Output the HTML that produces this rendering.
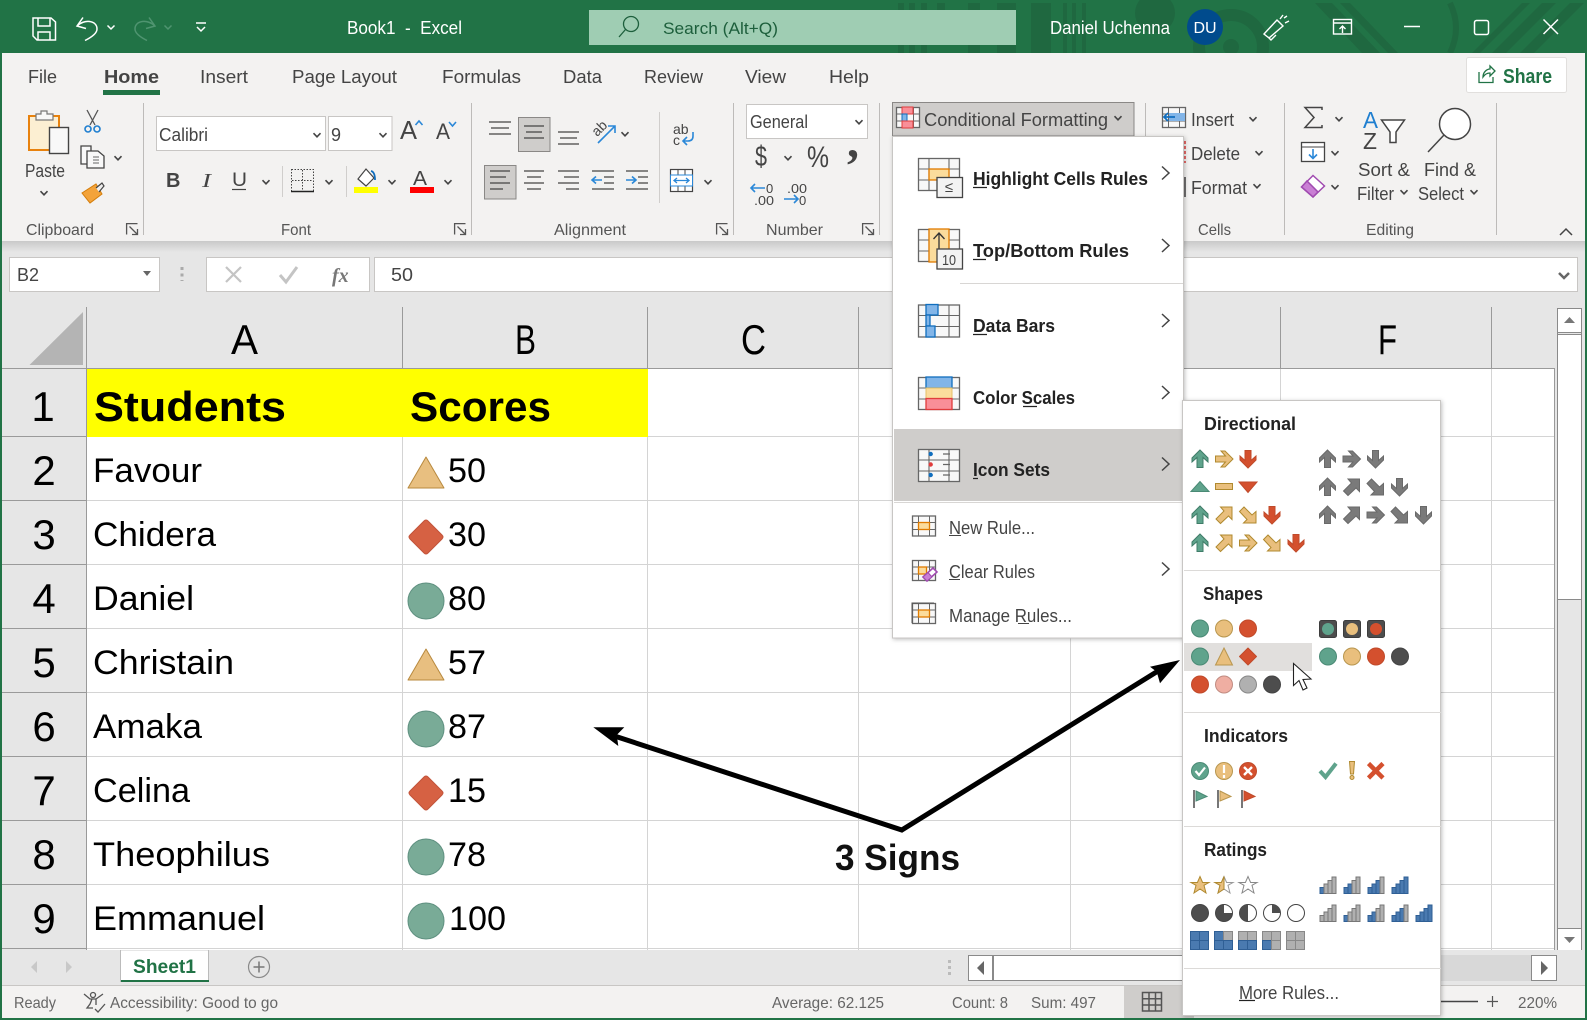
<!DOCTYPE html>
<html><head><meta charset="utf-8"><title>Book1 - Excel</title>
<style>
html,body{margin:0;padding:0;background:#e6e6e6}
svg{display:block;font-family:"Liberation Sans",sans-serif}
.r{fill:#444;font-size:18px}
.l{fill:#555;font-size:16px}
.w{fill:#fff;font-size:18px}
.c{fill:#000;font-size:34px}
.h{fill:#000;font-size:42px}
.b{fill:#000;font-size:42px;font-weight:bold}
.m{fill:#222;font-size:18px;font-weight:bold}
.n{fill:#444;font-size:18px}
.t{fill:#222;font-size:18px;font-weight:bold}
.s{fill:#666;font-size:16px}
</style></head><body>
<svg xmlns="http://www.w3.org/2000/svg" width="1587" height="1020" viewBox="0 0 1587 1020">
<defs>
<clipPath id="tb"><rect x="0" y="0" width="1587" height="53"/></clipPath>
<linearGradient id="sh" x1="0" y1="0" x2="0" y2="1"><stop offset="0" stop-color="#c9c9c9"/><stop offset="1" stop-color="#e6e6e6"/></linearGradient>
<filter id="ds" x="-5%" y="-5%" width="110%" height="110%"><feDropShadow dx="1" dy="1" stdDeviation="2" flood-color="#000" flood-opacity=".25"/></filter>
<path id="ch" d="M-3.500-1.800L0 1.800L3.500-1.800" fill="none" stroke="#444" stroke-width="1.600"/>
<path id="cr" d="M-3.500-6.500L3.500 0L-3.500 6.500" fill="none" stroke="#444" stroke-width="1.500"/>
<g id="ln" fill="none" stroke="#555" stroke-width="1.300"><path d="M.6 11.500V.6H11.500"/><path d="M3.500 3.500L11 11M11.500 6V11.500H6"/></g>
<path id="au" d="M0-9L8-1V3L3-1.500V8.500H-3V-1.500L-8 3V-1Z"/>
<path id="an" d="M8-8V4.500L4.500 1L-3.500 8.500L-8 4L0-4L-3.500-8Z"/>
<g id="gu"><use href="#au" fill="#5fa38c" stroke="#3f7c68"/></g>
<g id="gd"><use href="#au" transform="rotate(180)" fill="#d4502e" stroke="#c04a2a"/></g>
<g id="oe"><use href="#au" transform="rotate(90)" fill="#e9bf7d" stroke="#b08a2f"/></g>
<g id="one"><use href="#an" fill="#e9bf7d" stroke="#b08a2f"/></g>
<g id="ose"><use href="#an" transform="rotate(90)" fill="#e9bf7d" stroke="#b08a2f"/></g>
<g id="yu"><use href="#au" fill="#7a7a7a" stroke="#6a6a6a"/></g>
<g id="yd"><use href="#au" transform="rotate(180)" fill="#7a7a7a" stroke="#6a6a6a"/></g>
<g id="ye"><use href="#au" transform="rotate(90)" fill="#7a7a7a" stroke="#6a6a6a"/></g>
<g id="yne"><use href="#an" fill="#7a7a7a" stroke="#6a6a6a"/></g>
<g id="yse"><use href="#an" transform="rotate(90)" fill="#7a7a7a" stroke="#6a6a6a"/></g>
<circle id="cg" r="8.500" fill="#5fa38c" stroke="#4a8a75"/>
<circle id="co" r="8.500" fill="#e9bf7d" stroke="#b8964e"/>
<circle id="cd" r="8.500" fill="#d4502e" stroke="#c04a2a"/>
<circle id="ck" r="8.500" fill="#4d4d4d" stroke="#444"/>
<g id="g5"><rect x=".5" y=".5" width="41" height="32" fill="#f8f8f8" stroke="#666" stroke-width="1.300"/><path d="M11 0V33M31 0V33M0 11H42M0 22H42" stroke="#666" stroke-width="1.100" fill="none"/></g>
<g id="g3"><rect x=".5" y=".5" width="23" height="20" fill="#f8f8f8" stroke="#666" stroke-width="1.300"/><path d="M6.500 0V21M17.500 0V21M0 7H24M0 14H24" stroke="#666" stroke-width="1" fill="none"/></g>
<g id="b0" fill="#b0b0b0" stroke="#777"><rect x=".5" y="11" width="4" height="6"/><rect x="4.500" y="7.500" width="4" height="9.500"/><rect x="8.500" y="4" width="4" height="13"/><rect x="12.500" y=".5" width="4" height="16.500"/></g>
<g id="b1" stroke="#777"><rect x=".5" y="11" width="4" height="6" fill="#4a7ab0" stroke="#2f5f95"/><rect x="4.500" y="7.500" width="4" height="9.500" fill="#b0b0b0"/><rect x="8.500" y="4" width="4" height="13" fill="#b0b0b0"/><rect x="12.500" y=".5" width="4" height="16.500" fill="#b0b0b0"/></g>
<g id="b2" stroke="#777"><rect x=".5" y="11" width="4" height="6" fill="#4a7ab0" stroke="#2f5f95"/><rect x="4.500" y="7.500" width="4" height="9.500" fill="#4a7ab0" stroke="#2f5f95"/><rect x="8.500" y="4" width="4" height="13" fill="#b0b0b0"/><rect x="12.500" y=".5" width="4" height="16.500" fill="#b0b0b0"/></g>
<g id="b3" stroke="#777"><rect x=".5" y="11" width="4" height="6" fill="#4a7ab0" stroke="#2f5f95"/><rect x="4.500" y="7.500" width="4" height="9.500" fill="#4a7ab0" stroke="#2f5f95"/><rect x="8.500" y="4" width="4" height="13" fill="#4a7ab0" stroke="#2f5f95"/><rect x="12.500" y=".5" width="4" height="16.500" fill="#b0b0b0"/></g>
<g id="b4" fill="#4a7ab0" stroke="#2f5f95"><rect x=".5" y="11" width="4" height="6"/><rect x="4.500" y="7.500" width="4" height="9.500"/><rect x="8.500" y="4" width="4" height="13"/><rect x="12.500" y=".5" width="4" height="16.500"/></g>
<path id="st" d="M0-9L2.600-3H9L4-.2L6 7.500L0 3.500L-6 7.500L-4-.2L-9-3H-2.600Z"/>
<circle id="bc" r="18" fill="#79ab97" stroke="#5f9080"/>
<path id="bt" d="M0-16L18 15H-18Z" fill="#e8bf80" stroke="#b8893e" stroke-linejoin="round"/>
<path id="bd" d="M-16-2L-2-16Q0-18 2-16L16-2Q18 0 16 2L2 16Q0 18-2 16L-16 2Q-18 0-16-2Z" fill="#d66143" stroke="#c2533a"/>
</defs>

<!-- base -->
<rect width="1587" height="1020" fill="#e6e6e6"/>

<!-- grid -->
<rect x="87" y="369" width="1467" height="581" fill="#fff"/>
<rect x="87" y="369" width="561" height="68" fill="#ffff00"/>
<g stroke="#d4d4d4" stroke-width="1">
<path d="M402.500 437V950M647.500 437V950M858.500 369V950M1070.500 369V950M1280.500 369V950M1491.500 369V950"/>
<path d="M648 436.500H1554M87 500.500H1554M87 564.500H1554M87 628.500H1554M87 692.500H1554M87 756.500H1554M87 820.500H1554M87 884.500H1554M87 948.500H1554"/>
</g>
<path d="M2 436.500H87M2 500.500H87M2 564.500H87M2 628.500H87M2 692.500H87M2 756.500H87M2 820.500H87M2 884.500H87M2 948.500H87" stroke="#9a9a9a" fill="none"/>
<path d="M2 368.500H1554M86.500 307V950M402.500 307V368M647.500 307V368M858.500 307V368M1070.500 307V368M1280.500 307V368M1491.500 307V368M1554.500 368V950" stroke="#9a9a9a" fill="none"/>
<path d="M83 312V365H29.500Z" fill="#b4b4b4"/>

<text class="h" x="231" y="354" textLength="27" lengthAdjust="spacingAndGlyphs">A</text>
<text class="h" x="515" y="354" textLength="21" lengthAdjust="spacingAndGlyphs">B</text>
<text class="h" x="741" y="354" textLength="25" lengthAdjust="spacingAndGlyphs">C</text>
<text class="h" x="1378" y="354" textLength="19" lengthAdjust="spacingAndGlyphs">F</text>

<text class="h" x="43" y="421" text-anchor="middle">1</text>
<text class="h" x="44" y="485" text-anchor="middle">2</text>
<text class="h" x="44" y="549" text-anchor="middle">3</text>
<text class="h" x="44" y="613" text-anchor="middle">4</text>
<text class="h" x="44" y="677" text-anchor="middle">5</text>
<text class="h" x="44" y="741" text-anchor="middle">6</text>
<text class="h" x="44" y="805" text-anchor="middle">7</text>
<text class="h" x="44" y="869" text-anchor="middle">8</text>
<text class="h" x="44" y="933" text-anchor="middle">9</text>

<text class="b" x="94" y="421" textLength="192" lengthAdjust="spacingAndGlyphs">Students</text>
<text class="b" x="410" y="421" textLength="141" lengthAdjust="spacingAndGlyphs">Scores</text>

<text class="c" x="93" y="482" textLength="109" lengthAdjust="spacingAndGlyphs">Favour</text>
<text class="c" x="93" y="546" textLength="123" lengthAdjust="spacingAndGlyphs">Chidera</text>
<text class="c" x="93" y="610" textLength="101" lengthAdjust="spacingAndGlyphs">Daniel</text>
<text class="c" x="93" y="674" textLength="141" lengthAdjust="spacingAndGlyphs">Christain</text>
<text class="c" x="93" y="738" textLength="109" lengthAdjust="spacingAndGlyphs">Amaka</text>
<text class="c" x="93" y="802" textLength="97" lengthAdjust="spacingAndGlyphs">Celina</text>
<text class="c" x="93" y="866" textLength="177" lengthAdjust="spacingAndGlyphs">Theophilus</text>
<text class="c" x="93" y="930" textLength="172" lengthAdjust="spacingAndGlyphs">Emmanuel</text>

<text class="c" x="448" y="482" textLength="38" lengthAdjust="spacingAndGlyphs">50</text>
<text class="c" x="448" y="546" textLength="38" lengthAdjust="spacingAndGlyphs">30</text>
<text class="c" x="448" y="610" textLength="38" lengthAdjust="spacingAndGlyphs">80</text>
<text class="c" x="448" y="674" textLength="38" lengthAdjust="spacingAndGlyphs">57</text>
<text class="c" x="448" y="738" textLength="38" lengthAdjust="spacingAndGlyphs">87</text>
<text class="c" x="448" y="802" textLength="38" lengthAdjust="spacingAndGlyphs">15</text>
<text class="c" x="448" y="866" textLength="38" lengthAdjust="spacingAndGlyphs">78</text>
<text class="c" x="449" y="930" textLength="57" lengthAdjust="spacingAndGlyphs">100</text>

<use href="#bt" x="426" y="473"/>
<use href="#bd" x="426" y="537"/>
<use href="#bc" x="426" y="601"/>
<use href="#bt" x="426" y="665"/>
<use href="#bc" x="426" y="729"/>
<use href="#bd" x="426" y="793"/>
<use href="#bc" x="426" y="857"/>
<use href="#bc" x="426" y="921"/>

<!-- vertical scrollbar -->
<rect x="1557.500" y="308.500" width="24" height="643" fill="#e6e6e6" stroke="#8a8a8a"/>
<rect x="1557.500" y="308.500" width="24" height="24" fill="#fff" stroke="#8a8a8a"/>
<rect x="1557.500" y="334.500" width="24" height="265" fill="#fff" stroke="#8a8a8a"/>
<path d="M1564 323L1569.500 317L1575 323Z" fill="#777"/>
<rect x="1557.500" y="928.500" width="24" height="23" fill="#fff" stroke="#8a8a8a"/>
<path d="M1564 937L1569.500 943L1575 937Z" fill="#777"/>

<!-- tabs bar -->
<rect x="2" y="950" width="1583" height="35" fill="#e6e6e6"/>
<path d="M2 985.500H1585" stroke="#c8c6c4"/>
<rect x="121" y="951" width="88" height="30" fill="#fff"/>
<path d="M120.500 950V982M208.500 950V982" stroke="#bbb"/>
<rect x="121" y="980" width="88" height="2" fill="#217346"/>
<text x="133" y="973" font-size="19" font-weight="bold" fill="#217346" textLength="63" lengthAdjust="spacingAndGlyphs">Sheet1</text>
<path d="M37 961L31 967L37 973ZM66 961L72 967L66 973Z" fill="#c8c8c8"/>
<circle cx="259" cy="967" r="10.500" fill="none" stroke="#8a8a8a" stroke-width="1.200"/>
<path d="M253.500 967H264.500M259 961.500V972.500" stroke="#777" stroke-width="1.500"/>
<path d="M949.500 960V975" stroke="#bbb" stroke-width="3" stroke-dasharray="3 3"/>
<rect x="968.500" y="955.500" width="480" height="25" fill="#fff" stroke="#8a8a8a"/>
<path d="M993 955V981" stroke="#8a8a8a" stroke-width="2"/>
<rect x="1441" y="955" width="90" height="26" fill="#d8d8d8"/>
<rect x="968.500" y="955.500" width="24" height="25" fill="#fff" stroke="#8a8a8a"/>
<path d="M984 961L977 968L984 975Z" fill="#666"/>
<rect x="1531.500" y="955.500" width="25" height="25" fill="#fff" stroke="#8a8a8a"/>
<path d="M1541 961L1548 968L1541 975Z" fill="#666"/>

<!-- status -->
<rect x="2" y="986" width="1583" height="32" fill="#f3f2f1"/>
<text class="s" x="14" y="1008" textLength="42" lengthAdjust="spacingAndGlyphs">Ready</text>
<g fill="none" stroke="#555" stroke-width="1.300"><circle cx="93" cy="995" r="2.500"/><path d="M84 994L90 999L96 999L103 994M92 999L90 1004L87 1008H93M96 999V1005"/><path d="M95 1009L98 1012L105 1004"/></g>
<text class="s" x="110" y="1008" textLength="168" lengthAdjust="spacingAndGlyphs">Accessibility: Good to go</text>
<text class="s" x="772" y="1008" textLength="112" lengthAdjust="spacingAndGlyphs">Average: 62.125</text>
<text class="s" x="952" y="1008" textLength="56" lengthAdjust="spacingAndGlyphs">Count: 8</text>
<text class="s" x="1031" y="1008" textLength="65" lengthAdjust="spacingAndGlyphs">Sum: 497</text>
<rect x="1124" y="986" width="70" height="32" fill="#cfcdcb"/>
<g fill="none" stroke="#555" stroke-width="1.500"><rect x="1142.500" y="992.500" width="19" height="18.500"/><path d="M1149 992V1011M1155.500 992V1011M1142 998.700H1162M1142 1005H1162"/></g>
<path d="M1441 1001.500H1478" stroke="#444" stroke-width="1.600"/>
<path d="M1487 1001.500H1498M1492.500 996V1007" stroke="#555" stroke-width="1.200"/>
<text class="s" x="1518" y="1008" textLength="39" lengthAdjust="spacingAndGlyphs">220%</text>

<!-- formula bar -->
<rect x="0" y="241" width="1587" height="11" fill="url(#sh)"/>
<rect x="9.500" y="257.500" width="150" height="34" fill="#fff" stroke="#c8c6c4"/>
<text class="r" x="17" y="281" font-size="17" textLength="22" lengthAdjust="spacingAndGlyphs">B2</text>
<path d="M143 271H151L147 276Z" fill="#666"/>
<path d="M182 267V281" stroke="#aaa" stroke-width="3" stroke-dasharray="3 3.500"/>
<rect x="206.500" y="257.500" width="163" height="34" fill="#fff" stroke="#c8c6c4"/>
<path d="M226 267L241 282M241 267L226 282" stroke="#c4c4c4" stroke-width="2.200" fill="none"/>
<path d="M280 275L286 282L297 267" stroke="#c4c4c4" stroke-width="3" fill="none"/>
<text x="332" y="282" font-family="Liberation Serif" font-style="italic" font-weight="bold" font-size="20" fill="#777">fx</text>
<rect x="374.500" y="257.500" width="1203" height="34" fill="#fff" stroke="#c8c6c4"/>
<text class="r" x="391" y="281" textLength="22" lengthAdjust="spacingAndGlyphs">50</text>
<path d="M1559 273L1564 278L1569 273" fill="none" stroke="#666" stroke-width="2.500"/>

<!-- ribbon -->
<rect x="2" y="53" width="1583" height="188" fill="#f3f2f1"/>

<!-- title bar -->
<rect x="0" y="0" width="1587" height="53" fill="#217346"/>
<g clip-path="url(#tb)" fill="#1f6840">
<rect x="898" y="3" width="6" height="50"/><rect x="909" y="3" width="6" height="50"/><rect x="921" y="3" width="6" height="50"/><rect x="937" y="3" width="8" height="14"/><rect x="968" y="3" width="12" height="50"/><rect x="997" y="3" width="19" height="50"/>
<rect x="1031" y="3" width="20" height="50"/><rect x="1063" y="3" width="4" height="50"/><rect x="1072" y="3" width="4" height="50"/><rect x="1082" y="3" width="4" height="50"/>
<circle cx="1155" cy="13" r="20"/>
<circle cx="1231" cy="47" r="32" fill="none" stroke="#1f6840" stroke-width="12"/>
<circle cx="1231" cy="47" r="8"/>
<path d="M1315 3H1332L1380 53H1362ZM1340 3H1350L1398 53H1388ZM1472 53L1522 3H1530L1480 53ZM1492 53L1542 3H1556L1506 53ZM1520 53L1570 3H1584L1534 53Z"/>
<path d="M1450 3Q1462 28 1450 53" fill="none" stroke="#1f6840" stroke-width="6"/>
</g>
<rect x="589" y="10" width="427" height="35" fill="#9fcdb3"/>
<g fill="none" stroke="#1d5f3c" stroke-width="1.300"><circle cx="631" cy="24" r="7.500"/><path d="M625.500 29.500L619 37"/></g>
<text x="663" y="34" font-size="17" fill="#1d5f3c" textLength="115" lengthAdjust="spacingAndGlyphs">Search (Alt+Q)</text>
<g fill="none" stroke="#fff" stroke-width="1.500">
<path d="M33 18H51L55.500 22V40H37L33 36Z"/><path d="M38 18V26H50V18M38 40V32H50V40"/>
<path d="M83 17.500L77 26L86 28.500M77 26C84 19 97 20 97 29C97 33 92 37 85 40.500"/>
</g>
<g fill="none" stroke="#4f9470" stroke-width="1.500"><path d="M149 17.500L155 26L146 28.500M155 26C148 19 135 20 135 29C135 33 140 37 147 40.500"/></g>
<path d="M107.500 25.500L111 29L114.500 25.500" fill="none" stroke="#fff" stroke-width="1.500"/>
<path d="M164.500 25.500L168 29L171.500 25.500" fill="none" stroke="#4f9470" stroke-width="1.500"/>
<path d="M196 23H206M197 27L201 31L205 27" fill="none" stroke="#fff" stroke-width="1.500"/>
<text class="w" x="347" y="34" textLength="115" lengthAdjust="spacingAndGlyphs" xml:space="preserve">Book1  -  Excel</text>
<text class="w" x="1050" y="34" textLength="120" lengthAdjust="spacingAndGlyphs">Daniel Uchenna</text>
<circle cx="1205" cy="27" r="18" fill="#004b8d"/>
<text x="1205" y="33" text-anchor="middle" font-size="16" fill="#fff">DU</text>
<g fill="none" stroke="#fff" stroke-width="1.400"><path d="M1264 34L1277 20L1283 26L1269 38ZM1268 37L1271 40L1276 35"/><path d="M1280 19L1283 15M1285 23L1289 21M1284 18L1287 16"/></g>
<g fill="none" stroke="#fff" stroke-width="1.400"><rect x="1333.500" y="19.500" width="18" height="14.500"/><path d="M1333 23H1352M1342.500 33V26M1339.500 29L1342.500 26L1345.500 29"/></g>
<path d="M1404 26.500H1420" stroke="#fff" stroke-width="1.500"/>
<rect x="1474.500" y="20.500" width="14" height="14" rx="2" fill="none" stroke="#fff" stroke-width="1.500"/>
<path d="M1543.500 19.500L1558 34M1558 19.500L1543.500 34" stroke="#fff" stroke-width="1.500"/>

<!-- tabs -->
<text class="r" x="28" y="83" textLength="29" lengthAdjust="spacingAndGlyphs">File</text>
<text class="r" x="104" y="83" font-weight="bold" fill="#3a3a3a" textLength="55" lengthAdjust="spacingAndGlyphs">Home</text>
<rect x="103" y="90" width="57" height="5" fill="#217346"/>
<text class="r" x="200" y="83" textLength="48" lengthAdjust="spacingAndGlyphs">Insert</text>
<text class="r" x="292" y="83" textLength="105" lengthAdjust="spacingAndGlyphs">Page Layout</text>
<text class="r" x="442" y="83" textLength="79" lengthAdjust="spacingAndGlyphs">Formulas</text>
<text class="r" x="563" y="83" textLength="39" lengthAdjust="spacingAndGlyphs">Data</text>
<text class="r" x="644" y="83" textLength="59" lengthAdjust="spacingAndGlyphs">Review</text>
<text class="r" x="745" y="83" textLength="41" lengthAdjust="spacingAndGlyphs">View</text>
<text class="r" x="829" y="83" textLength="40" lengthAdjust="spacingAndGlyphs">Help</text>
<rect x="1466.500" y="57.500" width="100" height="35" rx="2" fill="#fff" stroke="#e1dfdd"/>
<g fill="none" stroke="#217346" stroke-width="1.300"><path d="M1479 72V82.500H1493V77"/><path d="M1483 77C1483 72 1487 69 1490 69V66L1495 71L1490 76V73C1487 73 1485 74 1483 77Z"/></g>
<text x="1503" y="83" font-size="20" font-weight="bold" fill="#217346" textLength="49" lengthAdjust="spacingAndGlyphs">Share</text>

<!-- separators -->
<path d="M143.500 103V235M471.500 103V235M733.500 103V235M879.500 103V235M1145.500 103V235M1284.500 103V235M1496.500 103V235" stroke="#bdbbb9"/>
<path d="M282.500 166V197M346.500 166V197M659.500 112V203" stroke="#d0cecc"/>

<!-- clipboard -->
<rect x="29" y="116" width="30" height="34" fill="#fcefd2" stroke="#e8820e" stroke-width="2"/>
<path d="M36 120V114H41V111H47V114H53V120Z" fill="#f8f8f8" stroke="#777" stroke-width="1.200"/>
<rect x="49.500" y="127.500" width="19" height="26" fill="#f8f8f8" stroke="#444" stroke-width="1.400"/>
<text class="r" x="25" y="177" textLength="40" lengthAdjust="spacingAndGlyphs">Paste</text>
<use href="#ch" x="44" y="193"/>
<g fill="none"><path d="M87 110L95 125M98 110L90 125" stroke="#555" stroke-width="1.300"/><circle cx="88" cy="129" r="3" stroke="#1f7fd0" stroke-width="1.600"/><circle cx="97" cy="129" r="3" stroke="#1f7fd0" stroke-width="1.600"/></g>
<g fill="#f8f8f8" stroke="#444" stroke-width="1.300"><path d="M81 146H91V164H81Z"/><path d="M87 151H98L104 156V168H87Z"/></g>
<path d="M93 157H99M93 160H99M93 163H99" stroke="#666"/>
<use href="#ch" x="118" y="158"/>
<path d="M82 193L96 184L102 194L90 203Z" fill="#f3a33a" stroke="#d47d0a"/>
<path d="M96 188L102 183L104 186L99 192" fill="#eee" stroke="#444" stroke-width="1.200"/>
<text class="l" x="26" y="235" textLength="68" lengthAdjust="spacingAndGlyphs">Clipboard</text>
<use href="#ln" x="126" y="223"/>

<!-- font -->
<rect x="156.500" y="116.500" width="169" height="34" fill="#fff" stroke="#c8c6c4"/>
<text class="r" x="159" y="141" fill="#222" textLength="49" lengthAdjust="spacingAndGlyphs">Calibri</text>
<use href="#ch" x="317" y="135" />
<rect x="328.500" y="116.500" width="63.500" height="34" fill="#fff" stroke="#c8c6c4"/>
<text class="r" x="331" y="141" fill="#222">9</text>
<use href="#ch" x="383" y="135"/>
<text x="400" y="139" font-size="26" fill="#444" textLength="17" lengthAdjust="spacingAndGlyphs">A</text>
<path d="M415.500 125L419 121L422.500 125" fill="none" stroke="#2b88d8" stroke-width="1.600"/>
<text x="436" y="139" font-size="22" fill="#444" textLength="14" lengthAdjust="spacingAndGlyphs">A</text>
<path d="M449 122L452.500 126L456 122" fill="none" stroke="#2b88d8" stroke-width="1.600"/>
<text x="166" y="187" font-size="20" font-weight="bold" fill="#444">B</text>
<text x="202" y="187" font-size="20" font-style="italic" font-family="Liberation Serif" fill="#444" textLength="9" lengthAdjust="spacingAndGlyphs">I</text>
<text x="232" y="186" font-size="19" fill="#444" textLength="15" lengthAdjust="spacingAndGlyphs">U</text>
<path d="M232 189.500H246" stroke="#444" stroke-width="1.200"/>
<use href="#ch" x="266" y="182"/>
<rect x="291.500" y="169.500" width="22" height="22" fill="none" stroke="#444" stroke-dasharray="1.500 1.500"/>
<path d="M302.500 170V191M292 180.500H313" stroke="#444" stroke-dasharray="1.500 1.500"/>
<path d="M291 191.500H314" stroke="#222" stroke-width="1.500"/>
<use href="#ch" x="329" y="182"/>
<path d="M358 179L366 169L374 178L366 186Z" fill="#fff" stroke="#444" stroke-width="1.200"/>
<path d="M371 171Q375 172 375 180" fill="none" stroke="#106ebe" stroke-width="1.800"/>
<rect x="354" y="187" width="24" height="6" fill="#ffff00"/>
<use href="#ch" x="392" y="182"/>
<text x="413" y="185" font-size="20" fill="#444" textLength="14" lengthAdjust="spacingAndGlyphs">A</text>
<rect x="410" y="187" width="24" height="6" fill="#ff0000"/>
<use href="#ch" x="448" y="182"/>
<text class="l" x="281" y="235" textLength="30" lengthAdjust="spacingAndGlyphs">Font</text>
<use href="#ln" x="454" y="223"/>

<!-- alignment -->
<rect x="518.500" y="117.500" width="31.500" height="34" fill="#cfcdcb" stroke="#8a8886"/>
<rect x="484.500" y="165.500" width="31.500" height="33.500" fill="#cfcdcb" stroke="#8a8886"/>
<g stroke="#444" stroke-width="1.300" fill="none">
<path d="M489 122H511M491 128H509M489 134H511"/>
<path d="M524 126H544M526 132H542M524 138H544"/>
<path d="M558 132H579M560 138H577M558 144H579"/>
<path d="M490 171H510M490 177H506M490 183H510M490 189H503"/>
<path d="M524 171H544M527 177H541M524 183H544M527 189H541"/>
<path d="M558 171H579M564 177H579M558 183H579M566 189H579"/>
<path d="M592 171H614M604 177H614M604 183H614M592 189H614"/>
<path d="M626 171H648M638 177H648M638 183H648M626 189H648"/>
</g>
<path d="M602 180H592M596 176.500L592 180L596 183.500M626 180H636M632 176.500L636 180L632 183.500" fill="none" stroke="#2b88d8" stroke-width="1.600"/>
<text x="593" y="133" font-size="14" fill="#444" transform="rotate(-45 600 130)">ab</text>
<path d="M598 143L615 126M608 126H615V133" fill="none" stroke="#2b88d8" stroke-width="1.600"/>
<use href="#ch" x="625" y="134"/>
<text x="673" y="134" font-size="14" fill="#444">ab</text>
<text x="673" y="145" font-size="14" fill="#444">c</text>
<path d="M693 132V136Q693 141 688 141H683M687 137L683 141L687 145" fill="none" stroke="#2b88d8" stroke-width="1.600"/>
<rect x="670.500" y="169.500" width="22" height="22" fill="#fff" stroke="#444" stroke-width="1.200"/>
<path d="M670 175H693M670 186H693M678 169V175M678 186V192M685 169V175M685 186V192" stroke="#444"/>
<rect x="670.500" y="175" width="22" height="11" fill="#fff" stroke="#2b88d8"/>
<path d="M674 180.500H689M677 178L674 180.500L677 183M686 178L689 180.500L686 183" fill="none" stroke="#2b88d8" stroke-width="1.300"/>
<use href="#ch" x="708" y="182"/>
<text class="l" x="554" y="235" textLength="72" lengthAdjust="spacingAndGlyphs">Alignment</text>
<use href="#ln" x="716" y="223"/>

<!-- number -->
<rect x="746.500" y="104.500" width="121" height="34" fill="#fff" stroke="#c8c6c4"/>
<text class="r" x="750" y="128" fill="#222" textLength="58" lengthAdjust="spacingAndGlyphs">General</text>
<use href="#ch" x="859" y="122"/>
<text x="755" y="166" font-size="29" fill="#444" textLength="12" lengthAdjust="spacingAndGlyphs">$</text>
<use href="#ch" x="788" y="158"/>
<text x="807" y="167" font-size="30" fill="#444" textLength="22" lengthAdjust="spacingAndGlyphs">%</text>
<text x="847" y="157" font-size="48" font-family="Liberation Serif" font-weight="bold" fill="#444">,</text>
<text x="766" y="193" font-size="13" fill="#444">0</text>
<text x="754" y="205" font-size="13" fill="#444" textLength="20" lengthAdjust="spacingAndGlyphs">.00</text>
<path d="M765 188H751M755 184L751 188L755 192" fill="none" stroke="#2b88d8" stroke-width="1.600"/>
<text x="787" y="193" font-size="13" fill="#444" textLength="20" lengthAdjust="spacingAndGlyphs">.00</text>
<text x="799" y="205" font-size="13" fill="#444">0</text>
<path d="M784 199H798M794 195L798 199L794 203" fill="none" stroke="#2b88d8" stroke-width="1.600"/>
<text class="l" x="766" y="235" textLength="57" lengthAdjust="spacingAndGlyphs">Number</text>
<use href="#ln" x="862" y="223"/>

<!-- cf button -->
<rect x="892.500" y="102.500" width="241.500" height="33.500" fill="#cfcdcb" stroke="#8a8886"/>
<g transform="translate(896,107)"><use href="#g3"/><rect x="6" y="0" width="11" height="7" fill="#f98f98" stroke="#e03c3c"/><rect x="6" y="7" width="5" height="7" fill="#82b5e8" stroke="#106ebe"/><rect x="6" y="14" width="11" height="7" fill="#f98f98" stroke="#e03c3c"/></g>
<text class="r" x="924" y="126" textLength="184" lengthAdjust="spacingAndGlyphs">Conditional Formatting</text>
<use href="#ch" x="1118" y="118"/>

<!-- cells -->
<g transform="translate(1162,107)"><use href="#g3"/></g>
<rect x="1169" y="113" width="16" height="8" fill="#82b5e8"/>
<path d="M1175 117H1164M1168 113L1164 117L1168 121" fill="none" stroke="#106ebe" stroke-width="1.800"/>
<text class="r" x="1191" y="126" textLength="43" lengthAdjust="spacingAndGlyphs">Insert</text>
<use href="#ch" x="1253" y="119"/>
<path d="M1185 141V163" stroke="#e03c3c" stroke-width="1.500" stroke-dasharray="3 2"/>
<text class="r" x="1191" y="160" textLength="49" lengthAdjust="spacingAndGlyphs">Delete</text>
<use href="#ch" x="1259" y="153"/>
<path d="M1185 177V197" stroke="#444" stroke-width="1.500"/>
<text class="r" x="1191" y="194" textLength="56" lengthAdjust="spacingAndGlyphs">Format</text>
<use href="#ch" x="1257" y="186"/>
<text class="l" x="1198" y="235" textLength="33" lengthAdjust="spacingAndGlyphs">Cells</text>

<!-- editing -->
<path d="M1322 110V107.500H1305L1314 117.500L1305 127.500H1322V125" fill="none" stroke="#444" stroke-width="1.500"/>
<use href="#ch" x="1339" y="119"/>
<rect x="1301.500" y="142.500" width="23" height="19" fill="#fff" stroke="#444" stroke-width="1.300"/>
<path d="M1301 147H1325" stroke="#444"/>
<path d="M1313 149V158M1309 154.500L1313 158.500L1317 154.500" fill="none" stroke="#2b88d8" stroke-width="1.600"/>
<use href="#ch" x="1335" y="153"/>
<path d="M1301.500 187L1313 175.500L1324.500 186L1313 197Z" fill="#fff" stroke="#a04bb0" stroke-width="1.500"/>
<path d="M1301.500 187L1307 181L1318 192L1313 197Z" fill="#c97fd4" stroke="#a04bb0" stroke-width="1.500"/>
<use href="#ch" x="1335" y="187"/>
<text x="1363" y="128" font-size="23" fill="#1f7fd0" textLength="15" lengthAdjust="spacingAndGlyphs">A</text>
<text x="1363" y="149" font-size="23" fill="#444" textLength="14" lengthAdjust="spacingAndGlyphs">Z</text>
<path d="M1381.500 120H1404.500L1396 132V142.500H1390V132Z" fill="#fff" stroke="#444" stroke-width="1.500"/>
<circle cx="1455" cy="124" r="15.500" fill="#fff" stroke="#444" stroke-width="1.500"/>
<path d="M1444 135L1428 152" stroke="#444" stroke-width="1.500"/>
<text class="r" x="1358" y="176" textLength="52" lengthAdjust="spacingAndGlyphs">Sort &amp;</text>
<text class="r" x="1357" y="200" textLength="37" lengthAdjust="spacingAndGlyphs">Filter</text>
<use href="#ch" x="1404" y="192"/>
<text class="r" x="1424" y="176" textLength="52" lengthAdjust="spacingAndGlyphs">Find &amp;</text>
<text class="r" x="1418" y="200" textLength="46" lengthAdjust="spacingAndGlyphs">Select</text>
<use href="#ch" x="1474" y="192"/>
<text class="l" x="1366" y="235" textLength="48" lengthAdjust="spacingAndGlyphs">Editing</text>
<path d="M1560 235L1566 229L1572 235" fill="none" stroke="#444" stroke-width="1.500"/>

<!-- frame -->
<rect x="0" y="53" width="2" height="967" fill="#217346"/>
<rect x="1585" y="53" width="2" height="967" fill="#217346"/>
<rect x="0" y="1018" width="1587" height="2" fill="#217346"/>

<!-- annotation -->
<path d="M616 736.500L901.800 830L1158 671" fill="none" stroke="#000" stroke-width="5"/>
<path d="M593.300 727.300H624.300L616.700 735L618.300 746Z" fill="#000"/>
<path d="M1180 660L1150 666.700L1156.700 671.700L1160 683.300Z" fill="#000"/>
<text x="835" y="870" font-size="36" font-weight="bold" fill="#111" textLength="125" lengthAdjust="spacingAndGlyphs">3 Signs</text>

<!-- cf menu -->
<rect x="892.500" y="136.500" width="291" height="501.500" fill="#fff" stroke="#c8c6c4" filter="url(#ds)"/>
<rect x="894" y="429" width="289" height="72" fill="#cfcdcb"/>
<path d="M960 283.500H1183M894 502.500H1183" stroke="#d8d6d4"/>

<g transform="translate(918,158)"><use href="#g5"/><rect x="11" y="11" width="20" height="11" fill="#fbdc9c" stroke="#e07b00" stroke-width="1.300"/><rect x="19" y="19.500" width="25.500" height="20" fill="#f3f3f3" stroke="#444" stroke-width="1.300"/></g>
<text x="949" y="192" font-size="15" fill="#444" text-anchor="middle">≤</text>

<g transform="translate(918,229)"><use href="#g5"/><rect x="11" y="0" width="20" height="33" fill="#fbdc9c" stroke="#e07b00" stroke-width="1.300"/><path d="M21 21V4M15.500 10L21 4L26.500 10" fill="none" stroke="#333" stroke-width="1.300"/><rect x="19" y="20" width="25.500" height="20" fill="#f3f3f3" stroke="#444" stroke-width="1.300"/></g>
<text x="942" y="265" font-size="15" fill="#444" textLength="14" lengthAdjust="spacingAndGlyphs">10</text>

<g transform="translate(918,304.500)"><use href="#g5"/><rect x="8" y="0" width="12" height="10.500" fill="#82b5e8" stroke="#106ebe" stroke-width="1.300"/><rect x="8" y="10.500" width="4" height="11" fill="#82b5e8" stroke="#106ebe" stroke-width="1.300"/><rect x="8" y="21.500" width="9" height="11" fill="#82b5e8" stroke="#106ebe" stroke-width="1.300"/></g>

<g transform="translate(918,377)"><use href="#g5"/><rect x="8" y="0" width="26" height="11" fill="#82b5e8" stroke="#106ebe" stroke-width="1.300"/><rect x="8" y="11" width="26" height="10.500" fill="#fbdc9c" stroke="#e6c068" stroke-width="1"/><rect x="8" y="21.500" width="26" height="11" fill="#f98f98" stroke="#e03c3c" stroke-width="1.300"/></g>

<g transform="translate(918,449)"><use href="#g5"/><circle cx="12.700" cy="5" r="2.200" fill="#106ebe"/><circle cx="12.700" cy="15.500" r="2.200" fill="#e03c3c"/><circle cx="12.700" cy="26" r="2.200" fill="#106ebe"/><path d="M25 5H32M25 15.500H32M25 26H32" stroke="#666" stroke-width="1.300"/></g>

<text class="m" x="973" y="185" textLength="175" lengthAdjust="spacingAndGlyphs">Highlight Cells Rules</text>
<text class="m" x="973" y="257" textLength="156" lengthAdjust="spacingAndGlyphs">Top/Bottom Rules</text>
<text class="m" x="973" y="332" textLength="82" lengthAdjust="spacingAndGlyphs">Data Bars</text>
<text class="m" x="973" y="404" textLength="102" lengthAdjust="spacingAndGlyphs">Color Scales</text>
<text class="m" x="973" y="476" textLength="77" lengthAdjust="spacingAndGlyphs">Icon Sets</text>
<path d="M973 187.500H987M973 259.500H986M973 334.500H987M1023 406.500H1037M973 478.500H978" stroke="#222" stroke-width="1.200"/>
<use href="#cr" x="1165.500" y="173"/>
<use href="#cr" x="1165.500" y="245.500"/>
<use href="#cr" x="1165.500" y="320.500"/>
<use href="#cr" x="1165.500" y="392.500"/>
<use href="#cr" x="1165.500" y="464"/>

<g transform="translate(912,515.500)"><use href="#g3"/><rect x="6.500" y="7" width="11" height="7" fill="#fbdc9c" stroke="#e07b00" stroke-width="1.300"/></g>
<g transform="translate(912,560)"><use href="#g3"/><rect x="6.500" y="7" width="8" height="7" fill="#fbdc9c" stroke="#e07b00" stroke-width="1.300"/><path d="M14 19L24 10L28 14L18 23Z" fill="#fff" stroke="#a04bb0" stroke-width="1.600" transform="translate(-3,-2)"/><path d="M11 17L16 12.500L20 17L15 21Z" fill="#c97fd4" stroke="#a04bb0"/></g>
<g transform="translate(912,603)"><use href="#g3"/><rect x="6.500" y="7" width="11" height="7" fill="#fbdc9c" stroke="#e07b00" stroke-width="1.300"/><path d="M-2 18V-2H20" fill="none" stroke="#555" transform="translate(2,2)"/></g>

<text class="n" x="949" y="534" textLength="86" lengthAdjust="spacingAndGlyphs">New Rule...</text>
<text class="n" x="949" y="578" textLength="86" lengthAdjust="spacingAndGlyphs">Clear Rules</text>
<text class="n" x="949" y="622" textLength="123" lengthAdjust="spacingAndGlyphs">Manage Rules...</text>
<path d="M949 535.500H961M949 579.500H960M1018 623.500H1029" stroke="#444" stroke-width="1.100"/>
<use href="#cr" x="1165.500" y="569"/>

<!-- icon sets menu -->
<rect x="1182.500" y="400.500" width="258" height="615" fill="#fff" stroke="#c8c6c4" filter="url(#ds)"/>
<rect x="1184" y="643" width="128" height="28" fill="#e1dfdd"/>
<path d="M1184 570.500H1441M1184 712.500H1441M1184 826.500H1441M1184 968.500H1441" stroke="#dcdad8"/>
<text class="t" x="1204" y="430" textLength="92" lengthAdjust="spacingAndGlyphs">Directional</text>
<text class="t" x="1203" y="600" textLength="60" lengthAdjust="spacingAndGlyphs">Shapes</text>
<text class="t" x="1204" y="742" textLength="84" lengthAdjust="spacingAndGlyphs">Indicators</text>
<text class="t" x="1204" y="856" textLength="63" lengthAdjust="spacingAndGlyphs">Ratings</text>
<text class="n" x="1239" y="999" textLength="100" lengthAdjust="spacingAndGlyphs">More Rules...</text>
<path d="M1239 1000.500H1255" stroke="#222" stroke-width="1.200"/>

<!-- directional -->
<use href="#gu" x="1200" y="459"/><use href="#oe" x="1224" y="459"/><use href="#gd" x="1248" y="459"/>
<use href="#yu" x="1327.500" y="459"/><use href="#ye" x="1351.500" y="459"/><use href="#yd" x="1375.500" y="459"/>

<path d="M1191 491.500L1200 481.500L1209 491.500Z" fill="#5fa38c" stroke="#4a8a75"/>
<rect x="1215.500" y="483.500" width="17" height="6" fill="#e9bf7d" stroke="#b08a2f"/>
<path d="M1239 482H1257L1248 492.500Z" fill="#d4502e" stroke="#c04a2a"/>
<use href="#yu" x="1327.500" y="487"/><use href="#yne" x="1351.500" y="487"/><use href="#yse" x="1375.500" y="487"/><use href="#yd" x="1399.500" y="487"/>

<use href="#gu" x="1200" y="515"/><use href="#one" x="1224" y="515"/><use href="#ose" x="1248" y="515"/><use href="#gd" x="1272" y="515"/>
<use href="#yu" x="1327.500" y="515"/><use href="#yne" x="1351.500" y="515"/><use href="#ye" x="1375.500" y="515"/><use href="#yse" x="1399.500" y="515"/><use href="#yd" x="1423.500" y="515"/>

<use href="#gu" x="1200" y="543"/><use href="#one" x="1224" y="543"/><use href="#oe" x="1248" y="543"/><use href="#ose" x="1272" y="543"/><use href="#gd" x="1296" y="543"/>

<!-- shapes -->
<use href="#cg" x="1200" y="628.500"/><use href="#co" x="1224" y="628.500"/><use href="#cd" x="1248" y="628.500"/>
<g fill="#4d4d4d" stroke="#3d3d3d"><rect x="1319.500" y="620.500" width="17" height="17" rx="2"/><rect x="1343.500" y="620.500" width="17" height="17" rx="2"/><rect x="1367.500" y="620.500" width="17" height="17" rx="2"/></g>
<circle cx="1328" cy="629" r="6" fill="#5fa38c"/><circle cx="1352" cy="629" r="6" fill="#e9bf7d"/><circle cx="1376" cy="629" r="6" fill="#d4502e"/>

<use href="#cg" x="1200" y="656.500"/>
<path d="M1224 648L1232.500 665H1215.500Z" fill="#e9bf7d" stroke="#b8964e"/>
<path d="M1239.500 656.500L1248 648L1256.500 656.500L1248 665Z" fill="#d4502e" stroke="#c04a2a" stroke-linejoin="round"/>
<use href="#cg" x="1328" y="656.500"/><use href="#co" x="1352" y="656.500"/><use href="#cd" x="1376" y="656.500"/><use href="#ck" x="1400" y="656.500"/>

<use href="#cd" x="1200" y="684.500"/>
<circle cx="1224" cy="684.500" r="8.500" fill="#efaea2" stroke="#c08c82"/>
<circle cx="1248" cy="684.500" r="8.500" fill="#b0b0b0" stroke="#888"/>
<use href="#ck" x="1272" y="684.500"/>

<!-- cursor -->
<path d="M1293.500 663.500V685.500L1299 680.500L1303 690L1307 688L1303 679.500L1311 679Z" fill="#fff" stroke="#222" stroke-width="1.100"/>

<!-- indicators -->
<use href="#cg" x="1200" y="771"/><use href="#co" x="1224" y="771"/><use href="#cd" x="1248" y="771"/>
<path d="M1195.500 771L1199 775L1205 767.500" fill="none" stroke="#fff" stroke-width="2.200"/>
<path d="M1224 765V773M1224 775V778" stroke="#fff" stroke-width="2.200"/>
<path d="M1244 767L1252 775M1252 767L1244 775" stroke="#fff" stroke-width="2.400"/>
<path d="M1320 771L1325.500 777L1336 763.500" fill="none" stroke="#5fa38c" stroke-width="4"/>
<path d="M1349.500 761.500H1354.500L1353.500 774H1350.500Z" fill="#e9bf7d" stroke="#b08a2f"/>
<circle cx="1352" cy="777.500" r="2" fill="#e9bf7d" stroke="#b08a2f"/>
<path d="M1368.500 763.500L1383 778M1383 763.500L1368.500 778" stroke="#d4502e" stroke-width="4.500"/>

<g stroke="#777" stroke-width="2"><path d="M1194 790V808M1218 790V808M1242 790V808"/></g>
<path d="M1196 791L1207 796.500L1196 801Z" fill="#5fa38c" stroke="#4a8a75"/>
<path d="M1220 791L1231 796.500L1220 801Z" fill="#e9bf7d" stroke="#b8964e"/>
<path d="M1244 791L1255 796.500L1244 801Z" fill="#d4502e" stroke="#c04a2a"/>

<!-- ratings -->
<use href="#st" x="1200" y="885.500" fill="#e9bf7d" stroke="#b08a2f"/>
<use href="#st" x="1224" y="885.500" fill="#fff" stroke="#999"/>
<path d="M1224 876.500L1221.400 882.500H1215L1220 885.300L1218 893L1224 889Z" fill="#e9bf7d" stroke="#b08a2f"/>
<use href="#st" x="1248" y="885.500" fill="#fff" stroke="#888"/>

<use href="#b1" x="1319.500" y="876.500"/><use href="#b2" x="1343.500" y="876.500"/><use href="#b3" x="1367.500" y="876.500"/><use href="#b4" x="1391.500" y="876.500"/>

<use href="#ck" x="1200" y="913"/>
<circle cx="1224" cy="913" r="8.500" fill="#4d4d4d" stroke="#444"/><path d="M1224 913V905A8 8 0 0 1 1232 913Z" fill="#fff"/>
<circle cx="1248" cy="913" r="8.500" fill="#fff" stroke="#444"/><path d="M1248 904.500A8.500 8.500 0 0 0 1248 921.500Z" fill="#4d4d4d"/>
<circle cx="1272" cy="913" r="8.500" fill="#fff" stroke="#444"/><path d="M1272 913V904.500A8.500 8.500 0 0 1 1280.500 913Z" fill="#4d4d4d"/>
<circle cx="1296" cy="913" r="8.500" fill="#fff" stroke="#444"/>

<use href="#b0" x="1319.500" y="904.500"/><use href="#b1" x="1343.500" y="904.500"/><use href="#b2" x="1367.500" y="904.500"/><use href="#b3" x="1391.500" y="904.500"/><use href="#b4" x="1415.500" y="904.500"/>

<g stroke="#888" stroke-width="1" fill="#b0b0b0">
<rect x="1190.500" y="931.500" width="9" height="9" fill="#4a7ab0" stroke="#2f5f95"/><rect x="1199.500" y="931.500" width="9" height="9" fill="#4a7ab0" stroke="#2f5f95"/><rect x="1190.500" y="940.500" width="9" height="9" fill="#4a7ab0" stroke="#2f5f95"/><rect x="1199.500" y="940.500" width="9" height="9" fill="#4a7ab0" stroke="#2f5f95"/>
<rect x="1214.500" y="931.500" width="9" height="9" fill="#4a7ab0" stroke="#2f5f95"/><rect x="1223.500" y="931.500" width="9" height="9"/><rect x="1214.500" y="940.500" width="9" height="9" fill="#4a7ab0" stroke="#2f5f95"/><rect x="1223.500" y="940.500" width="9" height="9" fill="#4a7ab0" stroke="#2f5f95"/>
<rect x="1238.500" y="931.500" width="9" height="9"/><rect x="1247.500" y="931.500" width="9" height="9"/><rect x="1238.500" y="940.500" width="9" height="9" fill="#4a7ab0" stroke="#2f5f95"/><rect x="1247.500" y="940.500" width="9" height="9" fill="#4a7ab0" stroke="#2f5f95"/>
<rect x="1262.500" y="931.500" width="9" height="9"/><rect x="1271.500" y="931.500" width="9" height="9"/><rect x="1262.500" y="940.500" width="9" height="9" fill="#4a7ab0" stroke="#2f5f95"/><rect x="1271.500" y="940.500" width="9" height="9"/>
<rect x="1286.500" y="931.500" width="9" height="9"/><rect x="1295.500" y="931.500" width="9" height="9"/><rect x="1286.500" y="940.500" width="9" height="9"/><rect x="1295.500" y="940.500" width="9" height="9"/>
</g>
</svg>
</body></html>
